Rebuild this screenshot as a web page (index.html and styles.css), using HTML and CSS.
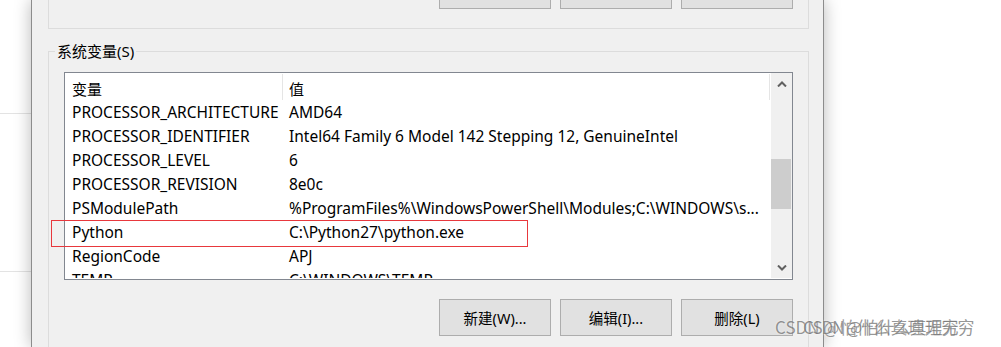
FILE: index.html
```html
<!DOCTYPE html>
<html lang="zh-CN">
	<head>
		<meta charset="UTF-8" />
		<meta
			name="viewport"
			content="width=device-width, initial-scale=1.0" />
		<title>环境变量</title>

		<link rel="stylesheet" href="styles.css">
	</head>
	<body>
		<div class="screen">
			<div class="backdrop">
				<div class="backdrop__line backdrop__line--first"></div>
				<div class="backdrop__line backdrop__line--second"></div>
			</div>

			<div class="dialog">
				<div class="group group--user">
					<div class="buttons buttons--top">
						<div class="btn"></div>
						<div class="btn"></div>
						<div class="btn"></div>
					</div>
				</div>

				<div class="group group--system">
					<div class="group__label">系统变量(S)</div>

					<div class="list">
						<div class="list__body">
							<div class="list__head">
								<div class="list__col list__col--name">变量</div>
								<div class="list__col list__col--value">值</div>
							</div>
							<div class="list__row">
								<div class="list__cell list__cell--name">PROCESSOR_ARCHITECTURE</div>
								<div class="list__cell">AMD64</div>
							</div>
							<div class="list__row">
								<div class="list__cell list__cell--name">PROCESSOR_IDENTIFIER</div>
								<div class="list__cell">Intel64 Family 6 Model 142 Stepping 12, GenuineIntel</div>
							</div>
							<div class="list__row">
								<div class="list__cell list__cell--name">PROCESSOR_LEVEL</div>
								<div class="list__cell">6</div>
							</div>
							<div class="list__row">
								<div class="list__cell list__cell--name">PROCESSOR_REVISION</div>
								<div class="list__cell">8e0c</div>
							</div>
							<div class="list__row">
								<div class="list__cell list__cell--name">PSModulePath</div>
								<div class="list__cell">%ProgramFiles%\WindowsPowerShell\Modules;C:\WINDOWS\s...</div>
							</div>
							<div class="list__row">
								<div class="list__cell list__cell--name">Python</div>
								<div class="list__cell">C:\Python27\python.exe</div>
							</div>
							<div class="list__row">
								<div class="list__cell list__cell--name">RegionCode</div>
								<div class="list__cell">APJ</div>
							</div>
							<div class="list__row list__row--cut">
								<div class="list__cell list__cell--name">TEMP</div>
								<div class="list__cell">C:\WINDOWS\TEMP</div>
							</div>
						</div>

						<div class="scrollbar">
							<div class="scrollbar__arrow">
								<svg width="10" height="6" viewBox="0 0 10 6"><path d="M1 5.5 L5 1.5 L9 5.5" fill="none" stroke="#606060" stroke-width="2"/></svg>
							</div>
							<div class="scrollbar__track">
								<div class="scrollbar__thumb"></div>
							</div>
							<div class="scrollbar__arrow">
								<svg width="10" height="6" viewBox="0 0 10 6"><path d="M1 0.5 L5 4.5 L9 0.5" fill="none" stroke="#606060" stroke-width="2"/></svg>
							</div>
						</div>
					</div>

					<div class="buttons">
						<div class="btn">新建(W)...</div>
						<div class="btn">编辑(I)...</div>
						<div class="btn">删除(L)</div>
					</div>
				</div>
			</div>
		</div>

		<!-- red mark drawn over the Python row -->
		<div class="highlight"></div>

		<div class="watermark">
			<span class="watermark__text">CSDN @怕什么真理无穷</span>
			<span class="watermark__text watermark__text--echo">CSDN @怕什么真理无穷</span>
		</div>
	</body>
</html>
```

FILE: styles.css
```css
* {
	box-sizing: border-box;
}
body {
	margin: 0;
	width: 1001px;
	height: 347px;
	overflow: hidden;
	background: #fff;
	font-family: "Noto Sans", "Noto Sans CJK SC", sans-serif;
	font-size: 15.5px;
	color: #000;
}
.screen {
	display: flex;
	height: 347px;
	overflow: hidden;
}

/* window behind the dialog */
.backdrop {
	width: 31px;
	flex-shrink: 0;
}
.backdrop__line {
	height: 1px;
	background: #e3e3e3;
}
.backdrop__line--first {
	margin-top: 113px;
}
.backdrop__line--second {
	margin-top: 157px;
}

.dialog {
	width: 793px;
	flex-shrink: 0;
	height: 347px;
	overflow: hidden;
	background: #f0f0f0;
	border-left: 1px solid #8c8c8c;
	border-right: 1px solid #8c8c8c;
	box-shadow: 0 0 16px rgba(0, 0, 0, 0.28);
	padding-left: 16px;
	position: relative;
	z-index: 1;
}

.group {
	width: 761px;
	border: 1px solid #dcdcdc;
}
.group--user {
	height: 29px;
	border-top: none;
}
.group--system {
	margin-top: 22px;
	height: 300px;
}
.group__label {
	width: fit-content;
	margin: -11px 0 0 6px;
	padding: 0 2px;
	height: 20px;
	line-height: 20px;
	font-size: 15px;
	background: #f0f0f0;
}

.buttons {
	display: flex;
	justify-content: flex-end;
	gap: 9px;
	padding-right: 15px;
	margin-top: 19px;
}
.buttons--top {
	margin-top: 0;
}
.btn {
	width: 112px;
	height: 37px;
	background: #e1e1e1;
	border: 1px solid #adadad;
	display: flex;
	align-items: center;
	justify-content: center;
	padding-bottom: 1px;
	font-size: 14.5px;
}
.buttons--top .btn {
	height: 9px;
	border-top: none;
}

/* list view */
.list {
	display: flex;
	margin: 11px 0 0 15px;
	width: 729px;
	height: 208px;
	border: 1px solid #828790;
	background: #fff;
	overflow: hidden;
}
.list__body {
	width: 706px;
	flex-shrink: 0;
	overflow: hidden;
}
.list__head {
	display: flex;
	height: 27px;
	padding-top: 1px;
}
.list__col {
	border-right: 1px solid #e5e5e5;
	display: flex;
	align-items: center;
	padding-top: 3px;
	font-size: 15px;
}
.list__col--name {
	width: 218px;
	padding-left: 7px;
}
.list__col--value {
	width: 487px;
	padding-left: 6px;
}
.list__row {
	display: flex;
	height: 24px;
	align-items: center;
	white-space: nowrap;
}
.list__row--cut {
	height: 10px;
	align-items: flex-start;
	padding-top: 1px;
	line-height: 22px;
	overflow: hidden;
}
.list__cell {
	padding-left: 6px;
}
.list__cell--name {
	width: 218px;
	padding-left: 7px;
}

.scrollbar {
	width: 21px;
	display: flex;
	flex-direction: column;
	background: #f0f0f0;
	margin-bottom: 1px;
}
.scrollbar__arrow {
	height: 21px;
	display: flex;
	align-items: center;
	justify-content: center;
}
.scrollbar__track {
	flex: 1;
}
.scrollbar__thumb {
	margin: 65px 1px 0 0;
	height: 50px;
	background: #cdcdcd;
}

.highlight {
	position: absolute;
	left: 51px;
	top: 220px;
	width: 477px;
	height: 27px;
	border: 1px solid #e8383d;
	z-index: 2;
}

.watermark {
	position: absolute;
	left: 775px;
	top: 316px;
	z-index: 3;
	font-family: "Noto Sans CJK SC", sans-serif;
	font-size: 17px;
	line-height: 22px;
	white-space: nowrap;
}
.watermark__text {
	color: rgba(80, 80, 80, 0.6);
	text-shadow: 0 0 2px rgba(255, 255, 255, 0.8);
}
.watermark__text--echo {
	position: absolute;
	left: 28px;
	top: 0;
	letter-spacing: -1px;
}
```
